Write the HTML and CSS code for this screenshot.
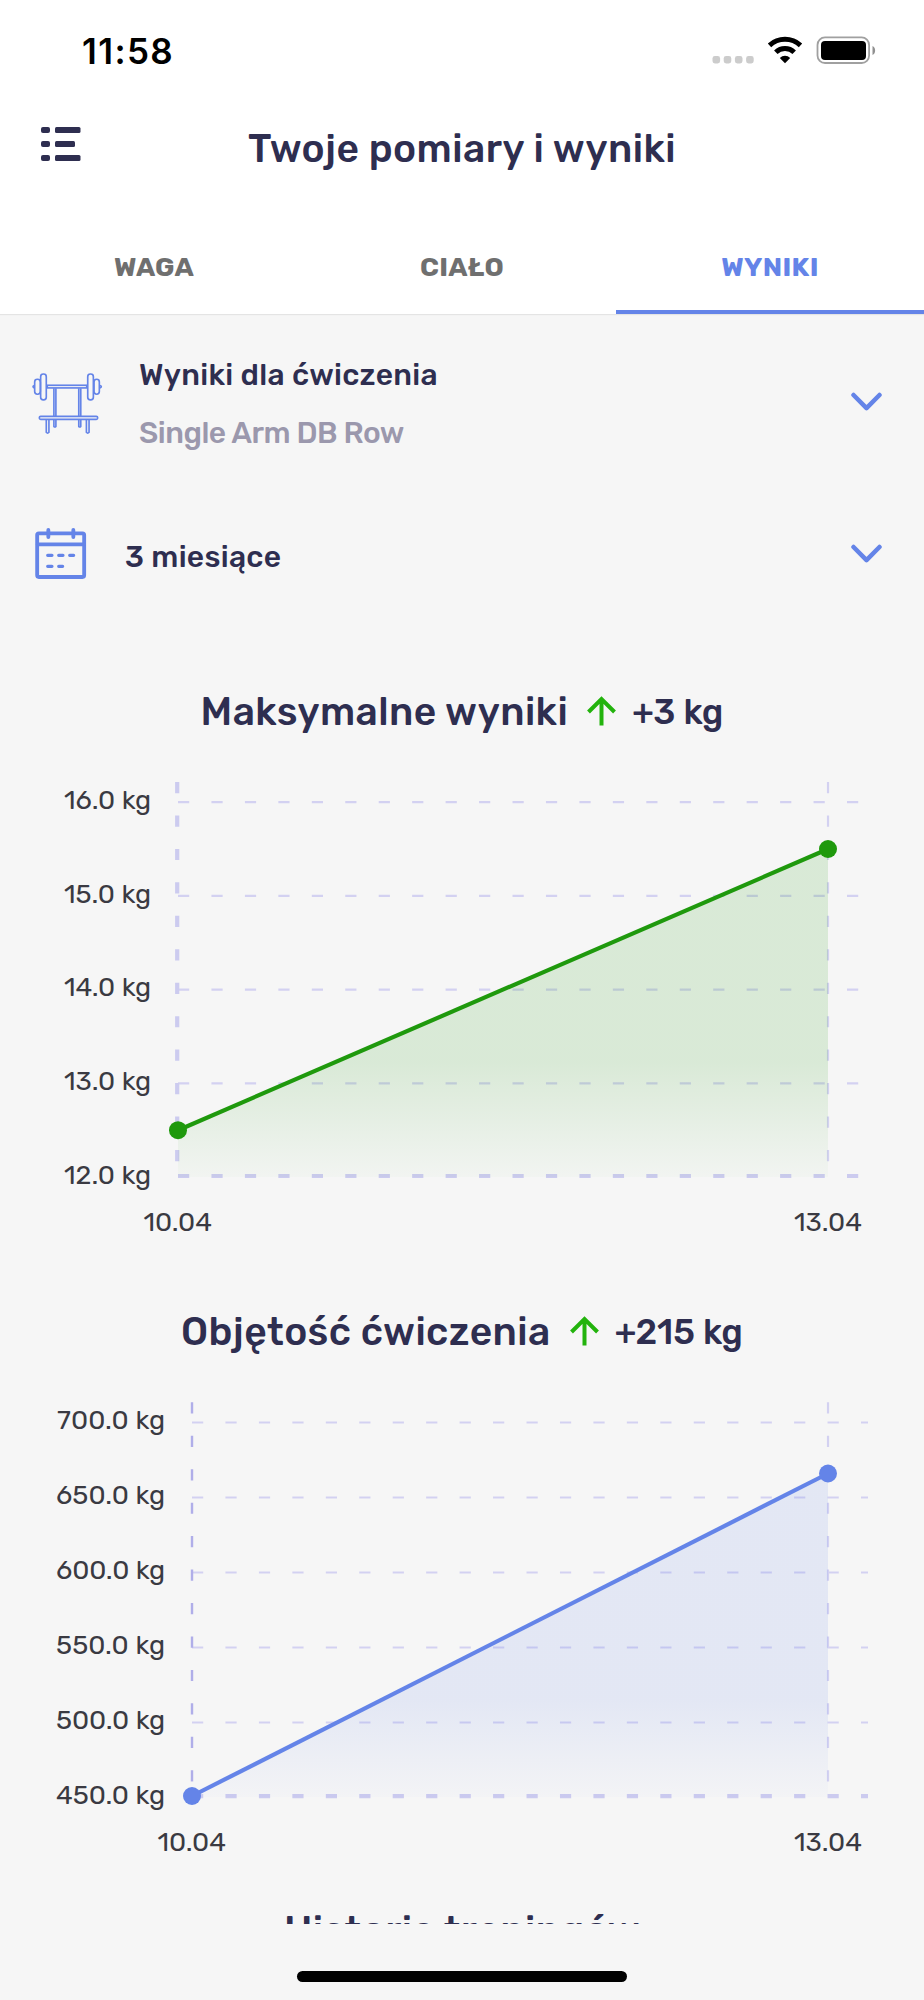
FILE: index.html
```html
<!DOCTYPE html>
<html lang="pl">
<head>
    <meta charset="utf-8">
    <title>Twoje pomiary i wyniki</title>
    <link rel="stylesheet" href="styles.css">
</head>
<body>
    <div class="screen">
        <div class="status-bar">
            <span class="clock">11:58</span>
            <svg class="status-icons" width="165" height="28" viewBox="0 0 165 28">
                <g fill="#cccccc">
                    <rect x="0.5" y="20" width="7.6" height="7.4" rx="2.4"/>
                    <rect x="11.7" y="20" width="7.6" height="7.4" rx="2.4"/>
                    <rect x="22.9" y="20" width="7.6" height="7.4" rx="2.4"/>
                    <rect x="34.1" y="20" width="7.6" height="7.4" rx="2.4"/>
                </g>
                <g fill="none" stroke="#000" stroke-width="5">
                    <path d="M57.5 9.3a23 23 0 0 1 31 0"/>
                    <path d="M63.8 16.3a13.3 13.3 0 0 1 18.4 0"/>
                </g>
                <path d="M73 27.3l-5.2-5.4a7.6 7.6 0 0 1 10.4 0z"/>
                <rect x="105.5" y="1.4" width="51.6" height="25.6" rx="7.5" fill="none" stroke="#a0a0a0" stroke-width="1.8"/>
                <rect x="109" y="5" width="45" height="19" rx="4"/>
                <path d="M160.500 10c3.500 1.500 3.500 7.500 0 9z" fill="#909090"/>
            </svg>
        </div>

        <div class="header">
            <svg class="menu-icon" width="40" height="34" viewBox="0 0 40 34" fill="#2e2e50">
                <rect x="0" y="0" width="9" height="6" rx="2"/>
                <rect x="14" y="0" width="25.5" height="6" rx="1.5"/>
                <rect x="0" y="14" width="9" height="6" rx="2"/>
                <rect x="14" y="14" width="20" height="6" rx="1.5"/>
                <rect x="0" y="28" width="9" height="6" rx="2"/>
                <rect x="14" y="28" width="25.5" height="6" rx="1.5"/>
            </svg>
            <h1>Twoje pomiary i wyniki</h1>
        </div>

        <div class="tabs">
            <div class="tab">WAGA</div>
            <div class="tab">CIAŁO</div>
            <div class="tab active">WYNIKI</div>
        </div>

        <div class="content">
            <div class="picker exercise">
                <svg class="bench-icon" width="71" height="63" viewBox="96 155 214 190" fill="none" stroke="#6484e8" stroke-width="5">
                    <rect x="142" y="195" width="119" height="8"/>
                    <rect x="104" y="177" width="17" height="45" rx="8"/>
                    <rect x="122" y="161" width="17" height="78" rx="8"/>
                    <rect x="283" y="177" width="16" height="45" rx="8"/>
                    <rect x="264" y="161" width="17" height="78" rx="8"/>
                    <path d="M103 196q-8 3 0 7M301 196q8 3 0 7"/>
                    <path d="M162 204v84M168 204v84M237 204v84M243 204v84"/>
                    <rect x="118" y="289" width="176" height="9" rx="4"/>
                    <path d="M139 299v38q4 5 8 0v-38M162 299v20q3 4 6 0v-20M237 299v20q3 4 6 0v-20M260 299v38q4 5 8 0v-38"/>
                </svg>
                <div class="picker-text">
                    <div class="label">Wyniki dla ćwiczenia</div>
                    <div class="value">Single Arm DB Row</div>
                </div>
                <svg class="chevron" width="32" height="19" viewBox="0 0 32 19">
                    <path d="M3.500 3l13 13.2L29.500 3"/>
                </svg>
            </div>

            <div class="picker period">
                <svg class="calendar-icon" width="52" height="51" viewBox="104 624 156 153" fill="none" stroke="#6484e8" stroke-linecap="round">
                    <rect x="110.5" y="640" width="141" height="131" rx="5" stroke-width="11.5"/>
                    <path d="M112 673h138M144 630v21M219 630v21" stroke-width="11.5"/>
                    <path d="M142 706h13M175 706h13M208 706h12M142 739h13M175 739h12" stroke-width="9.5"/>
                </svg>
                <div class="picker-text">
                    <div class="label">3 miesiące</div>
                </div>
                <svg class="chevron" width="32" height="19" viewBox="0 0 32 19">
                    <path d="M3.500 3l13 13.2L29.500 3"/>
                </svg>
            </div>

            <div class="chart-title max">
                <h2>Maksymalne wyniki</h2>
                <svg width="29" height="30" viewBox="0 0 29 30" fill="none" stroke="#23b30d" stroke-width="4">
                    <path d="M14.5 29.5V3M1.5 16L14.5 3l13 13"/>
                </svg>
                <span>+3 kg</span>
            </div>
            <svg class="chart" width="924" height="480" viewBox="0 0 924 480">
                <defs>
                    <linearGradient id="green" gradientUnits="userSpaceOnUse" x1="0" y1="79" x2="0" y2="407">
                        <stop offset="0" stop-color="#1f990d" stop-opacity="0.135"/>
                        <stop offset="0.65" stop-color="#1f990d" stop-opacity="0.135"/>
                        <stop offset="1" stop-color="#1f990d" stop-opacity="0.02"/>
                    </linearGradient>
                </defs>
                <path class="grid" d="M178 32.2H866M178 125.9H866M178 219.6H866M178 313.3H866M828 12V407"/>
                <path class="grid axis" d="M178 406H866M177.2 12V405"/>
                <path d="M178 360.2L828 79V407H178z" fill="url(#green)"/>
                <path class="line green" d="M178 360.2L828 79"/>
                <circle cx="178" cy="360.2" r="9" fill="#1f990d"/>
                <circle cx="828" cy="79" r="9" fill="#1f990d"/>
                <g class="ticks">
                    <text x="64" y="39" textLength="87">16.0 kg</text>
                    <text x="64" y="132.5" textLength="87">15.0 kg</text>
                    <text x="64" y="226" textLength="87">14.0 kg</text>
                    <text x="64" y="320" textLength="87">13.0 kg</text>
                    <text x="64" y="413.7" textLength="87">12.0 kg</text>
                    <text x="143.5" y="460.7" textLength="68.5">10.04</text>
                    <text x="794" y="460.7" textLength="68">13.04</text>
                </g>
            </svg>

            <div class="chart-title volume">
                <h2>Objętość ćwiczenia</h2>
                <svg width="29" height="30" viewBox="0 0 29 30" fill="none" stroke="#23b30d" stroke-width="4">
                    <path d="M14.5 29.5V3M1.5 16L14.5 3l13 13"/>
                </svg>
                <span>+215 kg</span>
            </div>
            <svg class="chart last" width="924" height="480" viewBox="0 0 924 480">
                <defs>
                    <linearGradient id="blue" gradientUnits="userSpaceOnUse" x1="0" y1="83" x2="0" y2="407">
                        <stop offset="0" stop-color="#6484e8" stop-opacity="0.13"/>
                        <stop offset="0.7" stop-color="#6484e8" stop-opacity="0.13"/>
                        <stop offset="1" stop-color="#6484e8" stop-opacity="0.02"/>
                    </linearGradient>
                </defs>
                <path class="grid" d="M192 32.5H868M192 107.5H868M192 182.5H868M192 257.5H868M192 332.5H868M828 12.3V407"/>
                <path class="grid left" d="M192 12.3V407"/>
                <path class="grid axis" d="M192 406.2H868"/>
                <path d="M192 406L828 83.5V407H192z" fill="url(#blue)"/>
                <path class="line blue" d="M192 406L828 83.5"/>
                <circle cx="192" cy="406" r="9" fill="#6484e8"/>
                <circle cx="828" cy="83.5" r="9" fill="#6484e8"/>
                <g class="ticks">
                    <text x="57" y="39.3" textLength="108">700.0 kg</text>
                    <text x="56" y="114.3" textLength="109">650.0 kg</text>
                    <text x="56" y="189.3" textLength="109">600.0 kg</text>
                    <text x="56" y="264.3" textLength="109">550.0 kg</text>
                    <text x="56" y="339.3" textLength="109">500.0 kg</text>
                    <text x="56" y="414.3" textLength="109">450.0 kg</text>
                    <text x="157.5" y="461" textLength="68.5">10.04</text>
                    <text x="794" y="461" textLength="68">13.04</text>
                </g>
            </svg>

            <div class="chart-title history">
                <h2>Historia treningów</h2>
            </div>
        </div>

        <div class="bottom-bar">
            <div class="home-indicator"></div>
        </div>
    </div>
</body>
</html>
```
FILE: styles.css
```css
body {
    margin: 0;
    font-family: Rubik, Roboto, sans-serif;
    background-color: #f6f6f6;
    color: #2e2e50;
}

.screen {
    width: 924px;
    height: 2000px;
    display: flex;
    flex-direction: column;
    overflow: hidden;
}

/* status bar */
.status-bar {
    height: 100px;
    box-sizing: border-box;
    padding: 36px 47px 0 82px;
    display: flex;
    justify-content: space-between;
    align-items: flex-start;
    background-color: #fff;
}

.clock {
    font-family: Inter, sans-serif;
    font-size: 35px;
    line-height: 30px;
    font-weight: 600;
    letter-spacing: 1.4px;
    color: #000;
}

/* header */
.header {
    height: 120px;
    display: grid;
    grid-template-columns: 40px 1fr 40px;
    padding: 0 41px;
    background-color: #fff;
}

.menu-icon {
    margin-top: 27px;
}

h1 {
    margin: 19px 0 0;
    font-size: 39px;
    line-height: 60px;
    font-weight: 500;
    text-align: center;
    letter-spacing: 0.43px;
    white-space: nowrap;
}

.tabs {
    height: 94px;
    display: flex;
    background-color: #fff;
    box-shadow: 0 1px 1px #e4e4e4;
    position: relative;
}

.tab {
    flex: 1;
    box-sizing: border-box;
    padding-top: 17px;
    font-size: 27px;
    line-height: 60px;
    font-weight: 700;
    letter-spacing: 0.3px;
    text-align: center;
    color: #6f6f6f;
    border-bottom: 4px solid transparent;
}

.tab.active {
    color: #6484e8;
    border-bottom-color: #6484e8;
}

.content {
    height: 1610px;
    overflow: hidden;
}

/* dropdown rows */
.picker {
    display: flex;
    align-items: center;
    box-sizing: border-box;
    padding: 0 42px 0 32px;
}

.exercise {
    height: 174px;
}

.period {
    height: 131px;
    padding-left: 35px;
}

.picker-text {
    flex: 1;
    padding: 6px 0 0 36px;
    font-size: 30px;
    line-height: 58px;
    font-weight: 500;
    letter-spacing: 0.28px;
}

.period .picker-text {
    padding-left: 38px;
}

.bench-icon {
    margin-top: 4px;
}

.value {
    color: #9b98ad;
    letter-spacing: -0.5px;
}

.chevron {
    fill: none;
    stroke: #6484e8;
    stroke-width: 4.5;
    stroke-linecap: round;
    stroke-linejoin: round;
}

/* charts */
.chart-title {
    height: 60px;
    margin-bottom: 29px;
    display: flex;
    justify-content: center;
    align-items: center;
}

.chart-title.max {
    margin-top: 62px;
}

.chart-title h2 {
    margin: 0;
    padding-top: 1px;
    font-size: 39px;
    line-height: 60px;
    font-weight: 500;
    letter-spacing: 0.4px;
    white-space: nowrap;
}

.chart-title svg {
    margin: 0 16px 0 19px;
}

.chart-title span {
    font-size: 35px;
    line-height: 60px;
    font-weight: 500;
    padding-top: 2px;
}

.chart {
    display: block;
    margin-bottom: 51px;
}

.chart.last {
    margin-bottom: 30px;
}

.grid {
    fill: none;
    stroke: #d3d1f1;
    stroke-width: 2.2;
    stroke-dasharray: 11.2 22.25;
}

.grid.axis {
    stroke: #cccbef;
    stroke-width: 4.2;
}

.grid.left {
    stroke: #b0aee9;
    stroke-width: 2.4;
}

.line {
    fill: none;
    stroke-width: 4.2;
}

.line.green {
    stroke: #1f990d;
}

.line.blue {
    stroke: #6484e8;
}

.ticks text {
    font-size: 27px;
    fill: #3a3a42;
}

.bottom-bar {
    height: 76px;
    padding-top: 47px;
    box-sizing: border-box;
}

.home-indicator {
    width: 330px;
    height: 11px;
    margin: 0 auto;
    border-radius: 6px;
    background-color: #000;
}
```
